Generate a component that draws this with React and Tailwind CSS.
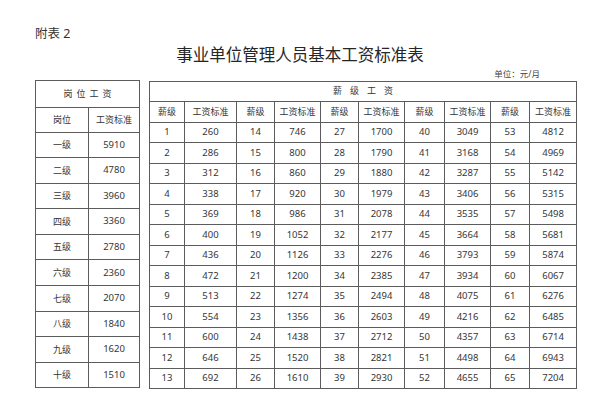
import React from 'react';

const font = { fontFamily: '"Noto Sans", "Noto Sans CJK SC", sans-serif' };

const posts = [
  ['一级', 5910],
  ['二级', 4780],
  ['三级', 3960],
  ['四级', 3360],
  ['五级', 2780],
  ['六级', 2360],
  ['七级', 2070],
  ['八级', 1840],
  ['九级', 1620],
  ['十级', 1510],
];

const salaries = [
  260, 286, 312, 338, 369, 400, 436, 472, 513, 554, 600, 646, 692,
  746, 800, 860, 920, 986, 1052, 1126, 1200, 1274, 1356, 1438, 1520, 1610,
  1700, 1790, 1880, 1979, 2078, 2177, 2276, 2385, 2494, 2603, 2712, 2821, 2930,
  3049, 3168, 3287, 3406, 3535, 3664, 3793, 3934, 4075, 4216, 4357, 4498, 4655,
  4812, 4969, 5142, 5315, 5498, 5681, 5874, 6067, 6276, 6485, 6714, 6943, 7204,
];

const colWidths = [35, 52, 38, 46, 38, 46, 40, 46, 39, 47];

const cell = 'border border-[#5c5c5c] p-0 text-center align-middle';

export default function App() {
  const rows = Array.from({ length: 13 }, (_, r) =>
    [0, 1, 2, 3, 4].map((c) => {
      const grade = r + 1 + c * 13;
      return [grade, salaries[grade - 1]];
    })
  );

  return (
    <div className="w-[600px] h-[404px] bg-white text-[#353535] px-[35px]" style={font}>
      <div className="pt-[27px] text-[12.5px] leading-[13px] text-[#333]">附表 2</div>
      <div className="mt-[6px] text-center text-[16.5px] leading-[17px] text-[#262626]">
        事业单位管理人员基本工资标准表
      </div>
      <div className="mt-[6px] pr-[25px] text-right text-[8.5px] leading-[9px] text-[#444]">单位：元/月</div>

      <div className="mt-[1.5px] flex items-start gap-[9px]">
        <table className="table-fixed border-collapse w-[104px]">
          <colgroup>
            <col style={{ width: 53 }} />
            <col style={{ width: 51 }} />
          </colgroup>
          <tbody>
            <tr className="h-[27px]">
              <td colSpan={2} className={`${cell} pl-[4px] text-[9px] tracking-[4px]`}>岗位工资</td>
            </tr>
            <tr className="h-[25px]">
              <td className={`${cell} text-[9px]`}>岗位</td>
              <td className={`${cell} text-[9px]`}>工资标准</td>
            </tr>
            {posts.map(([name, pay]) => (
              <tr key={name} className="h-[25.6px]">
                <td className={`${cell} text-[9px]`}>{name}</td>
                <td className={`${cell} text-[9.5px]`}>{pay}</td>
              </tr>
            ))}
          </tbody>
        </table>

        <table className="mt-[1px] table-fixed border-collapse w-[427px]">
          <colgroup>
            {colWidths.map((w, i) => (
              <col key={i} style={{ width: w }} />
            ))}
          </colgroup>
          <tbody>
            <tr className="h-[20px]">
              <td colSpan={10} className={`${cell} pl-[8px] text-[9px] tracking-[8px]`}>薪级工资</td>
            </tr>
            <tr className="h-[21px]">
              {[0, 1, 2, 3, 4].map((c) => (
                <React.Fragment key={c}>
                  <td className={`${cell} text-[9px]`}>薪级</td>
                  <td className={`${cell} text-[9px]`}>工资标准</td>
                </React.Fragment>
              ))}
            </tr>
            {rows.map((row, r) => (
              <tr key={r} className="h-[20.5px]">
                {row.map(([grade, pay]) => (
                  <React.Fragment key={grade}>
                    <td className={`${cell} text-[9.5px]`}>{grade}</td>
                    <td className={`${cell} text-[9.5px]`}>{pay}</td>
                  </React.Fragment>
                ))}
              </tr>
            ))}
          </tbody>
        </table>
      </div>
    </div>
  );
}
